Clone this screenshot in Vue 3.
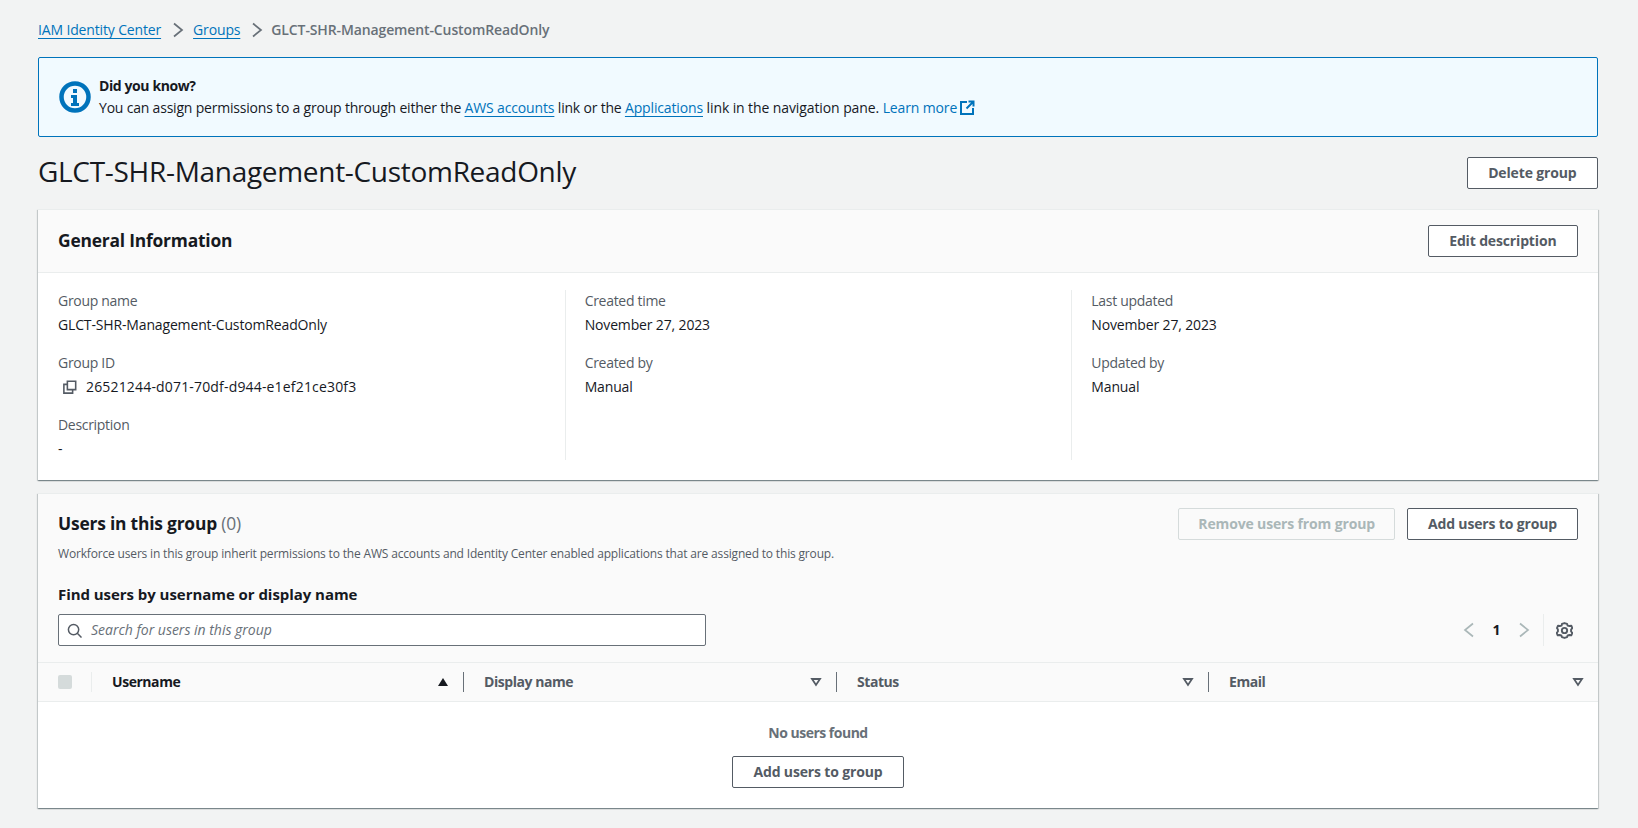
<template>
  <div class="page">
    <nav class="crumbs">
      <a class="link">IAM Identity Center</a>
      <svg class="crumb-sep" viewBox="0 0 16 16"><path d="M4 1.5 12 8 4 14.5" /></svg>
      <a class="link">Groups</a>
      <svg class="crumb-sep" viewBox="0 0 16 16"><path d="M4 1.5 12 8 4 14.5" /></svg>
      <span class="crumb-current">GLCT-SHR-Management-CustomReadOnly</span>
    </nav>

    <div class="alert">
      <svg class="alert-icon" viewBox="0 0 32 32">
        <circle cx="16" cy="16" r="13.5" />
        <rect class="fill" x="14" y="8" width="4" height="4" />
        <path class="fill" d="M12 14h6v8h2v3h-8v-3h2v-5h-2z" />
      </svg>
      <div>
        <div class="alert-title">Did you know?</div>
        <div class="alert-text">
          You can assign permissions to a group through either the
          <a class="link">AWS accounts</a> link or the
          <a class="link">Applications</a><span class="tail"> link in the navigation pane. </span><a class="link plain">Learn more</a>
          <svg class="ext" viewBox="0 0 16 16">
            <path d="M8 2H2v12h12V8" />
            <path d="M7.5 8.5 14 2M9.5 1.5h5v5" />
          </svg>
        </div>
      </div>
    </div>

    <div class="title-row">
      <h1>GLCT-SHR-Management-CustomReadOnly</h1>
      <button class="btn">Delete group</button>
    </div>

    <section class="card info-card">
      <header class="info-head">
        <h2>General Information</h2>
        <button class="btn">Edit description</button>
      </header>
      <div class="info-cols">
        <div v-for="(col, i) in columns" :key="i" class="info-col">
          <div v-for="item in col" :key="item.label" class="field">
            <div class="field-label">{{ item.label }}</div>
            <div class="field-value" :class="{ 'has-copy': item.copy }">
              <svg v-if="item.copy" class="copy" viewBox="0 0 16 16">
                <path d="M5 5h-4v10h10v-4" />
                <path d="M5 1.5h9.5V11H5z" />
              </svg>
              {{ item.value }}
            </div>
          </div>
        </div>
      </div>
    </section>

    <section class="card users-card">
      <div class="users-head">
        <div class="users-top">
          <h2>Users in this group <span class="count">(0)</span></h2>
          <div class="actions">
            <button class="btn disabled">Remove users from group</button>
            <button class="btn">Add users to group</button>
          </div>
        </div>
        <p class="desc">Workforce users in this group inherit permissions to the AWS accounts and Identity Center enabled applications that are assigned to this group.</p>
        <div class="find-label">Find users by username or display name</div>
        <div class="filter-row">
          <div class="search">
            <svg class="search-icon" viewBox="0 0 16 16">
              <circle cx="7" cy="7" r="5.5" />
              <path d="M11 11l4.5 4.5" />
            </svg>
            <span>Search for users in this group</span>
          </div>
          <div class="pager">
            <svg class="chev" viewBox="0 0 16 16"><path d="M12 1.5 4 8 12 14.5" /></svg>
            <span class="page-num">1</span>
            <svg class="chev" viewBox="0 0 16 16"><path d="M4 1.5 12 8 4 14.5" /></svg>
            <span class="pager-sep"></span>
            <svg class="gear" viewBox="0 0 16 16">
              <path d="M5.6 1.8 8 1l2.4.8.6 1.6 1.7.4 1.7-.3 1 2.2-1.2 1.4v1.8l1.2 1.4-1 2.2-1.7-.3-1.7.4-.6 1.6L8 15l-2.4-.8-.6-1.6-1.7-.4-1.7.3-1-2.2 1.2-1.4V7.1L.9 5.7l1-2.2 1.7.3 1.7-.4z" />
              <circle cx="8" cy="8" r="2.5" />
            </svg>
          </div>
        </div>
      </div>

      <div class="table-head">
        <div class="th th-check"><span class="check"></span></div>
        <div class="th sorted">
          Username
          <svg class="sort" viewBox="0 0 12 10"><path class="fill-dark" d="M6 1 11 9H1z" /></svg>
        </div>
        <div v-for="col in ['Display name', 'Status', 'Email']" :key="col" class="th">
          {{ col }}
          <svg class="sort" viewBox="0 0 12 10"><path d="M2 2h8L6 8z" /></svg>
        </div>
      </div>

      <div class="empty">
        <div class="empty-text">No users found</div>
        <button class="btn">Add users to group</button>
      </div>
    </section>
  </div>
</template>

<script setup>
const columns = [
  [
    { label: 'Group name', value: 'GLCT-SHR-Management-CustomReadOnly' },
    { label: 'Group ID', value: '26521244-d071-70df-d944-e1ef21ce30f3', copy: true },
    { label: 'Description', value: '-' },
  ],
  [
    { label: 'Created time', value: 'November 27, 2023' },
    { label: 'Created by', value: 'Manual' },
  ],
  [
    { label: 'Last updated', value: 'November 27, 2023' },
    { label: 'Updated by', value: 'Manual' },
  ],
]
</script>

<style>
body { background: #f2f3f3; }
</style>

<style scoped>
.page {
  width: 1638px;
  box-sizing: border-box;
  padding: 20px 40px 20px 38px;
  font-family: "Open Sans", "Noto Sans", sans-serif;
  font-size: 14px;
  line-height: 20px;
  letter-spacing: -0.15px;
  color: #16191f;
}
svg { fill: none; stroke: currentColor; stroke-width: 2; flex: none; }

.link { color: #0073bb; text-decoration: underline; text-underline-offset: 3px; }
.link.plain { text-decoration: none; }

.crumbs { display: flex; align-items: center; height: 20px; }
.crumb-sep { width: 16px; height: 16px; margin: 0 7px 0 9px; color: #687078; stroke-width: 1.7; }
.crumb-current { font-weight: 600; color: #687078; margin-left: -1px; letter-spacing: -0.12px; }

.alert {
  display: flex;
  align-items: center;
  gap: 8px;
  height: 80px;
  box-sizing: border-box;
  margin-top: 17px;
  padding: 0 20px;
  background: #f1faff;
  border: 1px solid #0073bb;
  border-radius: 2px;
}
.alert-icon { width: 32px; height: 32px; color: #0073bb; stroke-width: 4.5; }
.alert-icon .fill { fill: #0073bb; stroke: none; }
.alert-title { font-weight: 700; margin-bottom: 2px; letter-spacing: -0.4px; }
.alert-text { letter-spacing: -0.2px; }
.alert-text .link { letter-spacing: -0.14px; }
.alert-text .tail { letter-spacing: -0.1px; }
.ext { width: 16px; height: 16px; margin-left: 2px; color: #0073bb; vertical-align: -3px; }

.title-row { display: flex; justify-content: space-between; align-items: center; margin-top: 20px; }
h1 { margin: 0; padding-bottom: 4px; font-size: 28px; line-height: 24px; font-weight: 400; letter-spacing: -0.3px; }

.btn {
  height: 32px;
  padding: 0 20px;
  background: #fff;
  border: 1px solid #545b64;
  border-radius: 2px;
  font: inherit;
  font-weight: 700;
  letter-spacing: inherit;
  color: #545b64;
}
.title-row .btn, .info-head .btn { padding: 0 20.5px; }
.btn.disabled { padding: 0 19px; color: #aab7b8; border-color: #d5dbdb; background: #fafafa; }

.card {
  background: #fff;
  border-top: 1px solid #eaeded;
  box-shadow: 0 1px 1px 0 rgba(0, 28, 36, .3), 1px 1px 1px 0 rgba(0, 28, 36, .15), -1px 1px 1px 0 rgba(0, 28, 36, .15);
  border-radius: 0;
}
h2 { margin: 0; font-size: 17.4px; line-height: 22px; font-weight: 700; letter-spacing: -0.2px; }

.info-card { margin-top: 20px; }
.info-head {
  display: flex;
  justify-content: space-between;
  align-items: center;
  height: 62px;
  padding: 0 20px;
  background: #fafafa;
  border-bottom: 1px solid #eaeded;
}
.info-head h2 { padding-bottom: 3px; }
.info-cols {
  display: grid;
  grid-template-columns: repeat(3, 1fr);
  padding: 17px 20px 20px;
  height: 170px;
}
.info-col { border-left: 1px solid #eaeded; padding: 1px 0 0 19px; }
.info-col:first-child { border-left: 0; padding-left: 0; }
.field { height: 62px; }
.field:last-child { height: auto; }
.field-label { color: #545b64; letter-spacing: -0.3px; }
.field-value { margin-top: 4px; display: flex; align-items: center; }
.has-copy { letter-spacing: 0.17px; }
.copy { width: 14px; height: 14px; margin: 0 9px 0 5px; color: #545b64; stroke-width: 1.8; }

.users-card { margin-top: 13px; }
.users-head { background: #fafafa; padding: 14px 20px 16px; border-bottom: 1px solid #eaeded; }
.users-top { display: flex; justify-content: space-between; align-items: flex-start; height: 32px; }
.users-top h2 { margin-top: 4px; }
.count { font-weight: 400; color: #687078; }
.actions { display: flex; gap: 12px; }
.desc { margin: 4px 0 0; font-size: 12px; line-height: 20px; color: #545b64; letter-spacing: -0.17px; }
.find-label { margin-top: 20px; font-size: 15px; font-weight: 700; letter-spacing: -0.05px; }
.filter-row { display: flex; justify-content: space-between; align-items: center; margin-top: 10px; }
.search {
  display: flex;
  align-items: center;
  gap: 9px;
  width: 648px;
  height: 32px;
  box-sizing: border-box;
  padding: 0 8px;
  background: #fff;
  border: 1px solid #687078;
  border-radius: 2px;
  font-style: italic;
  letter-spacing: -0.01px;
  color: #687078;
}
.search-icon { width: 15px; height: 15px; color: #545b64; stroke-width: 1.6; }
.pager { display: flex; align-items: center; height: 32px; margin-right: 5px; color: #aab7b8; }
.chev { width: 16px; height: 16px; stroke-width: 1.7; }
.page-num { width: 39px; text-align: center; font-weight: 700; color: #16191f; }
.pager-sep { width: 1px; height: 32px; margin: 0 12px 0 11px; background: #eaeded; }
.gear { width: 17px; height: 17px; color: #545b64; stroke-width: 1.8; stroke-linejoin: round; }

.table-head {
  display: grid;
  grid-template-columns: 54px 371px 373px 372px 1fr;
  height: 38px;
  align-items: center;
  background: #fafafa;
  border-bottom: 1px solid #eaeded;
}
.th {
  display: flex;
  align-items: center;
  justify-content: space-between;
  height: 20px;
  padding: 0 14px 0 20px;
  border-left: 1px solid #687078;
  font-weight: 700;
  letter-spacing: -0.45px;
  color: #545b64;
}
.th-check { padding: 0 0 0 20px; border-left: 0; border-right: 1px solid #eaeded; }
.check { width: 14px; height: 14px; background: #d5dbdb; border-radius: 2px; }
.th.sorted { border-left: 0; color: #16191f; padding-left: 20px; }
.sort { width: 12px; height: 10px; stroke-width: 1.8; color: #545b64; }
.sort .fill-dark { fill: #16191f; stroke: none; }
.empty { display: flex; flex-direction: column; align-items: center; padding: 21px 0 20px; }
.empty-text { font-weight: 700; color: #687078; margin-bottom: 13px; letter-spacing: -0.5px; }
</style>
